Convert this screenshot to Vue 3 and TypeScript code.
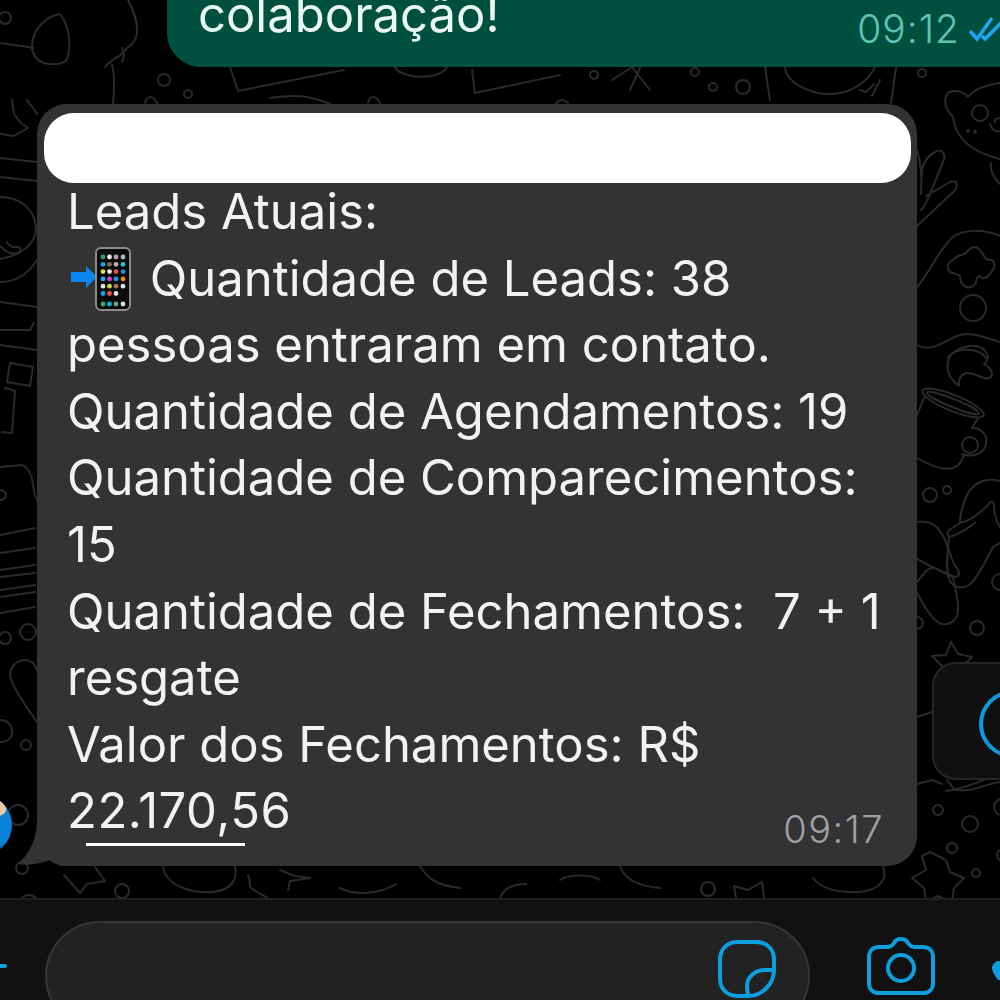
<template>
  <div class="screen">
    <!-- wallpaper doodles, free canvas behind the chat -->
    <svg class="doodles" viewBox="0 0 1000 1000" fill="none">
      <path v-for="(d, i) in doodles" :key="i" :d="d" />
      <circle v-for="(c, i) in rings" :key="'r' + i" :cx="c[0]" :cy="c[1]" :r="c[2]" />
      <ellipse cx="953" cy="403" rx="33" ry="8" transform="rotate(22 953 403)" />
      <ellipse cx="953" cy="403" rx="28" ry="4" transform="rotate(22 953 403)" />
    </svg>

    <div class="chat">
      <div class="sent">
        <span class="sent-text">colaboração!</span>
        <span class="sent-meta">
          09:12
          <svg class="ticks" viewBox="0 0 44 26" fill="none">
            <path d="M2 15l7 8L24 2M14 20l3 3L38 2" />
          </svg>
        </span>
      </div>

      <div class="row">
        <div class="avatar"></div>
        <div class="received">
          <svg class="tail" viewBox="0 0 50 46">
            <path d="M21 0C21 16 15 34 1 44c10 2 22 0 33-4 4 3 8 5 12 6h4V0z" />
          </svg>
          <div class="redacted"></div>
          <div class="body">
            <div>Leads Atuais:</div>
            <div>
              <svg class="emoji" viewBox="0 0 66 66">
                <path d="M3 26h15v-6l11 11-11 11v-6H3z" fill="#0a84ef" />
                <rect x="28" y="2" width="34" height="62" rx="5" fill="#0c0c0c" stroke="#8b8b8b" stroke-width="2" />
                <circle v-for="(dot, i) in emojiDots" :key="i" :cx="dot.x" :cy="dot.y" r="2.4" :fill="dot.c" />
              </svg>
              Quantidade de Leads: 38
            </div>
            <div>pessoas entraram em contato.</div>
            <div>Quantidade de Agendamentos: 19</div>
            <div>Quantidade de Comparecimentos:</div>
            <div>15</div>
            <div>Quantidade de Fechamentos:&nbsp; 7 + 1</div>
            <div>resgate</div>
            <div>Valor dos Fechamentos: R$</div>
            <div class="last-line">
              <span class="amount">22.170,56</span>
              <span class="time">09:17</span>
            </div>
          </div>
          <div class="scribble"></div>
        </div>
        <div class="side-btn">
          <svg class="side-icon" viewBox="0 0 70 70" fill="none">
            <circle cx="35" cy="35" r="32" />
          </svg>
        </div>
      </div>
    </div>

    <div class="composer">
      <svg class="plus" viewBox="0 0 8 12" fill="none"><path d="M0 6h5" /></svg>
      <div class="input">
        <svg class="sticker" viewBox="0 0 58 58" fill="none">
          <path d="M20 2h18c11 0 18 7 18 18v10c0 14-12 26-26 26H20C9 56 2 49 2 38V20C2 9 9 2 20 2z" />
          <path d="M56 30h-9c-11 0-18 8-18 16 0 4 1 7 1 10" />
        </svg>
      </div>
      <svg class="camera" viewBox="0 0 68 58" fill="none">
        <path d="M12 10h9c3 0 4-1 6-4 1-2 3-4 7-4s6 2 7 4c2 3 3 4 6 4h9c6 0 10 4 10 10v26c0 6-4 10-10 10H12C6 56 2 52 2 46V20c0-6 4-10 10-10z" />
        <circle cx="34" cy="31" r="13" />
      </svg>
      <svg class="mic" viewBox="0 0 8 30" fill="none"><path d="M7 3C4 3 2 6 2 8s2 6 5 10z" /></svg>
    </div>
  </div>
</template>

<script setup lang="ts">
const doodles: string[] = [
  // dog, top left
  'M128 0c6 12 10 22 9 33-1 8-5 12-10 15-5 6-10 10-12 10-4 4-8 6-10 9',
  'M60 14C46 16 32 30 32 46c0 8 4 14 12 17 6 2 16 2 22-2 6-14 4-34-6-47z',
  'M0 43c12 2 24 3 34 5M112 65c2 8 3 20 1 38',
  'M122 62c3-6 2-10 0-14',
  // top strip
  'M230 67l8 24 106-21M472 70l3 23 85-18',
  'M395 67c5 12 45 14 52 0',
  'M612 80l20-13 18 23M640 68l-10 22',
  'M765 67l5 33M785 67c0 15 30 33 60 25 15-5 25-15 30-25',
  'M860 90l6 2 8-8M880 80l-8 16M896 68l-5 35',
  'M270 98c30-4 40-2 60 6M145 103c2-8 8-8 12 0M368 103c2-8 8-8 12 0',
  'M556 103c4-4 8-4 12 0',
  // bear, top right
  'M1000 83c-14 2-26 6-32 14-5-6-15-8-20-4-5 6-3 16 5 24 2 18 14 34 47 42',
  'M990 124c2 6 6 8 10 7M1000 118c-4 0-6 2-5 4M1000 184c-6-6-10-14-9-21',
  // leaves
  'M917 226l33-31c10-8 8-16 0-13l-24 14M921 210c6-4 14-30 22-48 4-8-2-14-8-10-8 4-14 14-13 24M917 150c4 12 5 28 4 44',
  // gamepad
  'M917 287c14-16 22-38 36-50 10-8 30-8 47-1',
  'M967 252c4-6 10-6 13-2l4 6c2 4 4 4 8 4 3 2 3 8 0 11l-4 5c-4 4-8 2-8 0-2 0-4 2-4 6-2 6-8 6-12 4-3-3-4-8-4-10-2-2-6-2-10-4-3-3-3-8 0-10l8-6c3-1 6-1 9-4z',
  'M917 345c14 8 28-4 40-9 12-5 24 0 43 6M948 358c4-10 30-12 38 0',
  // moon and mug
  'M959 386c-14-10-16-28-2-36 12-6 26-6 30 4 2 4 0 8-3 10 4 2 8 6 8 10 0 4-4 5-8 4-6-2-12-6-18-5-6 2-8 6-7 13z',
  'M924 398l-7 17M917 458c10 6 24 13 36 10 8-3 10-9 11-14M978 418l-6 10c10 0 16 8 14 16-2 10-14 14-24 10',
  // flip-flops
  'M1000 481c-14-4-26 2-32 12-5 10-8 22-8 30l-11 7c-2 3-2 5 0 7-1 14-4 30 0 42 4 10 14 10 20 6 8-6 18-26 24-38l7-4',
  'M960 523c10-2 18-8 28-18 2-4 6-4 6 0 0 10 2 16 6 22M949 537c8-2 18-8 26-14',
  'M917 522c14-2 22 4 28 18 4 10 6 16 8 22l5 8c2 3 1 6-2 7-10-2-20-8-39-18',
  'M917 582l10-12c4-3 8-3 12 0l14 7c2 12 6 24 5 34-1 10-8 14-16 13-8-2-16-14-25-31',
  'M932 656l14-1 5-13 7 12 14 3-10 10 1 6M932 656l10 10',
  // behind side button
  'M917 717l15-5M917 784l15-4 10 4M946 791c20-2 36-12 54-16',
  'M947 780l8 10c20 2 30-6 45-8',
  'M930 852l-8 4 4 14-14 8 12 10 2 14 12-6 14 6 2-14 10-10-14-6-4-12z',
  // left strip
  'M12 100l2 14 6 8 8 6-14 8-14-2M27 100c4 6 8 10 10 14M0 158l37 4M0 177l37 4',
  'M0 197c18 0 34 10 36 30 1 16-14 28-36 32M0 282c16 0 28-8 37-22',
  'M0 246c6 6 12 10 20 6 2-4-2-6-5-5-4 1-8-4-8-5',
  'M0 302l37 5M0 330h30l4-7M0 345l37 5',
  'M10 363l23 4-3 19-23-4zM5 388l10 3-3 42-10-1',
  'M0 467l22-2c6 2 10 10 11 20 1 8 2 12 4 15M0 490c3 0 6 2 6 5s-3 5-6 5',
  'M0 535l35-7M0 553l35-5M0 570l35-5M0 577l35-4M0 590l35-5M0 597l35-5M0 613l35-6',
  'M37 670c-2-6-6-10-12-10-8 0-14 6-15 14 0 8 14 30 27 48',
  'M0 720c10 0 12 8 12 12 0 6-4 10-12 10',
  // bottom strip
  'M64 875l16 18 7-9 18-3-10-14M163 866c2 20 30 28 50 26 18-2 25-12 22-26',
  'M248 875c2 6 2 10 2 10 0 6 12 8 17 13M280 870l15 6 15 2-20 3-2 9M22 898c4-4 10-4 14 0',
  'M340 888c16 8 40 6 56-4M420 866c8 14 20 20 40 22M500 898c4-10 14-14 26-14M560 880c10-6 30-6 40 0M620 866c4 12 16 20 40 22',
  'M736 898l-2-12 14 4 14-8 2 16M813 878c12 16 50 18 65 8 6-6 8-10 5-20',
]

const rings: [number, number, number][] = [
  [5, 18, 6], [164, 80, 6], [188, 94, 4], [594, 75, 4], [695, 72, 4], [713, 87, 4], [743, 87, 7], [922, 73, 4],
  [980, 113, 8], [968, 131, 1], [975, 132, 1], [973, 308, 13], [970, 445, 8], [930, 495, 7], [947, 490, 4],
  [1000, 582, 8], [917, 623, 6], [977, 628, 7], [938, 810, 5], [970, 824, 8], [952, 848, 5], [976, 873, 4],
  [1002, 807, 8], [1003, 855, 6], [5, 638, 6], [28, 632, 8], [26, 745, 5], [18, 815, 10], [22, 868, 6],
  [122, 891, 7], [708, 889, 7],
]

const emojiRows = [
  ['#2f9e6e', '#eeeeee', '#b9a4b0', '#b9b3c8'],
  ['#0aa5e8', '#8a6a5c', '#bdb0b0', '#27c2d8'],
  ['#d8e04a', '#e9e9e9', '#f0503c', '#1b8fe0'],
  ['#1bb0ec', '#e23ad0', '#1aa0e8', '#f08a1c'],
  ['#dddddd', '#c6dc3c', '#a8705c', '#dddddd'],
  ['#10a4ec', '#f0503c', '#e0e0e0', '#0c0c0c'],
]
const dotX = [35, 41.5, 48, 55]
const emojiDots = [
  ...emojiRows.flatMap((row, r) => row.map((c, i) => ({ x: dotX[i], y: 11 + r * 7.3, c }))),
  ...['#22b573', '#12b0e8', '#5aa59a', '#dddddd'].map((c, i) => ({ x: dotX[i], y: 58, c })),
]
</script>

<style scoped>
.screen,
.screen * {
  box-sizing: border-box;
}

.screen {
  position: relative;
  width: 1000px;
  height: 1000px;
  overflow: hidden;
  background: #000;
  display: flex;
  flex-direction: column;
  font-family: Inter, "Liberation Sans", sans-serif;
}

.doodles {
  position: absolute;
  inset: 0;
  width: 1000px;
  height: 1000px;
}

.doodles path,
.doodles circle,
.doodles ellipse {
  stroke: #2a2a2a;
  stroke-width: 2;
  stroke-linecap: round;
  stroke-linejoin: round;
}

.chat {
  position: relative;
  flex: 1;
  display: flex;
  flex-direction: column;
  min-height: 0;
}

.sent {
  height: 67px;
  margin-left: 167px;
  margin-right: -40px;
  padding: 0 28px 0 31px;
  background: #005040;
  border-radius: 0 0 0 34px;
  display: flex;
  justify-content: space-between;
  align-items: flex-start;
}

.sent-text {
  margin-top: -18px;
  font-size: 49px;
  line-height: 66px;
  color: #e9f7f3;
}

.sent-meta {
  display: flex;
  align-items: center;
  gap: 8px;
  margin-top: 7px;
  font-size: 39px;
  font-weight: 300;
  letter-spacing: 1px;
  line-height: 44px;
  color: #5fc4b8;
}

.ticks {
  width: 44px;
  height: 26px;
  flex: none;
}

.ticks path {
  stroke: #1ea7f2;
  stroke-width: 3.5;
}

.row {
  display: flex;
  margin-top: 37px;
  padding-left: 37px;
  align-items: flex-start;
}

/* only the edge of the sender's photo shows */
.avatar {
  position: absolute;
  left: -48px;
  top: 795px;
  width: 60px;
  height: 60px;
  border-radius: 50%;
  background:
    radial-gradient(circle at 78% 22%, #e6c9ae 0 7px, transparent 8px),
    linear-gradient(180deg, #0a82d8 0 80%, #1a3a6a 100%);
}

.received {
  position: relative;
  width: 880px;
  height: 762px;
  flex: none;
  padding: 9px 6px 0 7px;
  background: #333335;
  border-radius: 30px;
}

.tail {
  position: absolute;
  left: -21px;
  bottom: 0;
  width: 50px;
  height: 46px;
  fill: #333335;
}

.redacted {
  position: relative;
  height: 70px;
  background: #fff;
  border-radius: 30px;
}

.body {
  position: relative;
  margin-top: -4px;
  padding-left: 23px;
  font-size: 49px;
  line-height: 66.6px;
  color: #f2f2f2;
}

.body > div {
  height: 66.6px;
  white-space: nowrap;
}

.emoji {
  width: 66px;
  height: 66px;
  margin-left: 1px;
  margin-right: 2px;
  vertical-align: -16px;
}

.last-line {
  display: flex;
  justify-content: space-between;
  align-items: flex-start;
  padding-right: 27px;
}

.amount {
  letter-spacing: 0.5px;
}

.time {
  margin-top: 29px;
  font-size: 38px;
  font-weight: 300;
  letter-spacing: 1.5px;
  line-height: 44px;
  color: #a0a0a2;
}

.scribble {
  position: absolute;
  left: 49px;
  top: 739px;
  width: 159px;
  height: 3px;
  background: #fff;
}

.side-btn {
  width: 90px;
  height: 118px;
  flex: none;
  margin: 558px -30px 0 15px;
  padding: 25px 0 0 44px;
  background: #101010;
  border: 2px solid #262626;
  border-radius: 24px;
}

.side-icon {
  display: block;
  width: 70px;
  height: 70px;
}

.side-icon circle {
  stroke: #0c9ade;
  stroke-width: 4;
}

.composer {
  position: relative;
  height: 102px;
  flex: none;
  display: flex;
  align-items: flex-start;
  background: #111;
  border-top: 2px solid #1f1f1f;
}

.composer svg path,
.composer svg circle {
  stroke: #0d9ede;
  stroke-width: 4;
  stroke-linecap: round;
  stroke-linejoin: round;
}

.plus {
  width: 8px;
  height: 12px;
  margin: 60px 37px 0 0;
  flex: none;
}

.input {
  width: 765px;
  height: 110px;
  flex: none;
  padding: 17px 0 0 671px;
  background: #222223;
  border: 2px solid #363636;
  border-radius: 55px;
  margin-top: 21px;
}

.sticker {
  display: block;
  width: 58px;
  height: 58px;
}

.camera {
  width: 68px;
  height: 58px;
  flex: none;
  margin: 37px 0 0 57px;
}

.mic {
  width: 8px;
  height: 30px;
  flex: none;
  margin: 60px 0 0 57px;
}

.mic path {
  fill: #0d9ede;
}
</style>
